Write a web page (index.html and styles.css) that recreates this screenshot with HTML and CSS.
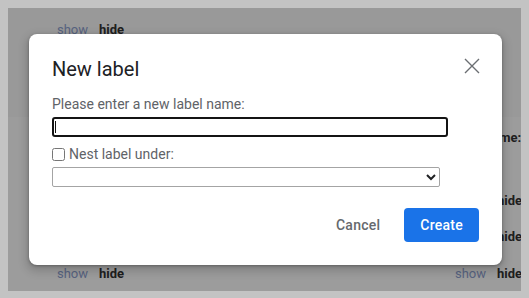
FILE: index.html
```html
<!DOCTYPE html>
<html lang="en">
<head>
<meta charset="utf-8">
<title>New label</title>
<link rel="stylesheet" href="styles.css">
</head>
<body>
<div class="screen">
  <div class="bg">
    <div class="top">
      <div class="sh"><span class="show">show</span><span class="hide">hide</span></div>
    </div>
    <div class="row r1"><div></div><div class="head">Name:</div></div>
    <div class="row r2"><div></div><div class="sh"><span class="show">show</span><span class="hide">hide</span></div></div>
    <div class="row r3"><div></div><div class="sh"><span class="show">show</span><span class="hide">hide</span></div></div>
    <div class="row r4">
      <div class="sh"><span class="show">show</span><span class="hide">hide</span></div>
      <div class="sh"><span class="show">show</span><span class="hide">hide</span></div>
    </div>
  </div>
  <div class="overlay"></div>
  <div class="dialog" role="dialog">
    <div class="header">
      <h1 class="title">New label</h1>
      <button class="close" aria-label="Close">
        <svg width="16" height="16" viewBox="0 0 16 16"><path d="M1 1 L15 15 M15 1 L1 15" stroke="#6b6e72" stroke-width="1.4" fill="none"/></svg>
      </button>
    </div>
    <div class="label">Please enter a new label name:</div>
    <div class="field"><input class="name" type="text"></div>
    <label class="nest"><input type="checkbox" class="cb"><span>Nest label under:</span></label>
    <select class="parent"><option></option></select>
    <div class="actions">
      <button class="btn cancel">Cancel</button>
      <button class="btn create">Create</button>
    </div>
  </div>
</div>
</body>
</html>
```
FILE: styles.css
```css
html, body {
  margin: 0;
  padding: 0;
}
body {
  background: #c3c3c3;
  font-family: Roboto, "Liberation Sans", sans-serif;
  width: 529px;
  height: 298px;
  overflow: hidden;
}
.screen {
  position: relative;
  margin: 8px;
  width: 513px;
  height: 283px;
  background: #fff;
  overflow: hidden;
}
.bg {
  padding-left: 49px;
  font-size: 13px;
  line-height: 16px;
}
.top {
  height: 95px;
  padding-top: 14px;
  margin-left: -49px;
  padding-left: 49px;
  background: #fbfbfb;
  border-bottom: 1px solid #ffffff;
}
.sh {
  display: flex;
  gap: 11px;
  white-space: nowrap;
}
.show { color: #8fa2d2; }
.hide { color: #333; font-weight: 700; }
.head { color: #333; font-weight: 700; padding-left: 28px; white-space: nowrap; font-size: 13px; }
.row {
  display: grid;
  grid-template-columns: 398px 120px;
  height: 16px;
}
.r1 { margin-top: 12px; }
.r2 { margin-top: 47px; }
.r3 { margin-top: 20px; }
.r4 { margin-top: 21px; }

.overlay {
  position: absolute;
  inset: 0;
  background: rgba(0, 0, 0, 0.39);
}
.dialog {
  position: absolute;
  left: 21px;
  top: 26px;
  width: 473px;
  height: 231px;
  box-sizing: border-box;
  padding: 23px;
  background: #fff;
  border-radius: 8px;
  box-shadow: 0 1px 3px rgba(0,0,0,.3), 0 4px 8px 3px rgba(0,0,0,.15);
  display: flex;
  flex-direction: column;
  align-items: flex-start;
}
.header {
  display: flex;
  justify-content: space-between;
  align-items: flex-start;
  width: 100%;
  height: 24px;
}
.title {
  margin: 0;
  font-size: 20px;
  line-height: 24px;
  font-weight: 400;
  color: #202124;
}
.close {
  margin: 1px -1px 0 0;
  padding: 0;
  width: 16px;
  height: 16px;
  border: 0;
  background: none;
  display: block;
}
.close svg { display: block; }
.label {
  margin-top: 15px;
  font-size: 14px;
  line-height: 16px;
  color: #5f6368;
}
.field {
  position: relative;
  margin-top: 5px;
  width: 396px;
  height: 20px;
}
.field::after {
  content: "";
  position: absolute;
  left: 3px;
  top: 4px;
  width: 1px;
  height: 12px;
  background: #111;
}
.name {
  box-sizing: border-box;
  width: 100%;
  height: 20px;
  margin: 0;
  border: 2px solid #141414;
  border-radius: 3px;
  outline: none;
  padding: 0 3px;
  background: #fff;
  font: 14px Roboto, sans-serif;
}
.nest {
  margin-top: 9px;
  display: flex;
  align-items: center;
  height: 16px;
  font-size: 14px;
  line-height: 16px;
  color: #5f6368;
}
.cb {
  margin: 0 4px 0 0;
  width: 13px;
  height: 13px;
}
.parent {
  margin-top: 5px;
  width: 388px;
  height: 20px;
  box-sizing: border-box;
  border: 1px solid #a4a4a4;
  border-radius: 2px;
  background: #fff;
  font: 13px Roboto, sans-serif;
  color: #202124;
}
.actions {
  margin-top: 21px;
  width: 100%;
  display: flex;
  justify-content: flex-end;
  gap: 8px;
}
.btn {
  height: 34px;
  padding: 0 16px;
  border: 0;
  border-radius: 4px;
  font-family: Roboto, "Liberation Sans", sans-serif;
  font-size: 14px;
  font-weight: 500;
  letter-spacing: 0.25px;
  cursor: pointer;
}
.cancel {
  background: none;
  color: #66696d;
}
.create {
  background: #1a73e8;
  color: #fff;
}
```
